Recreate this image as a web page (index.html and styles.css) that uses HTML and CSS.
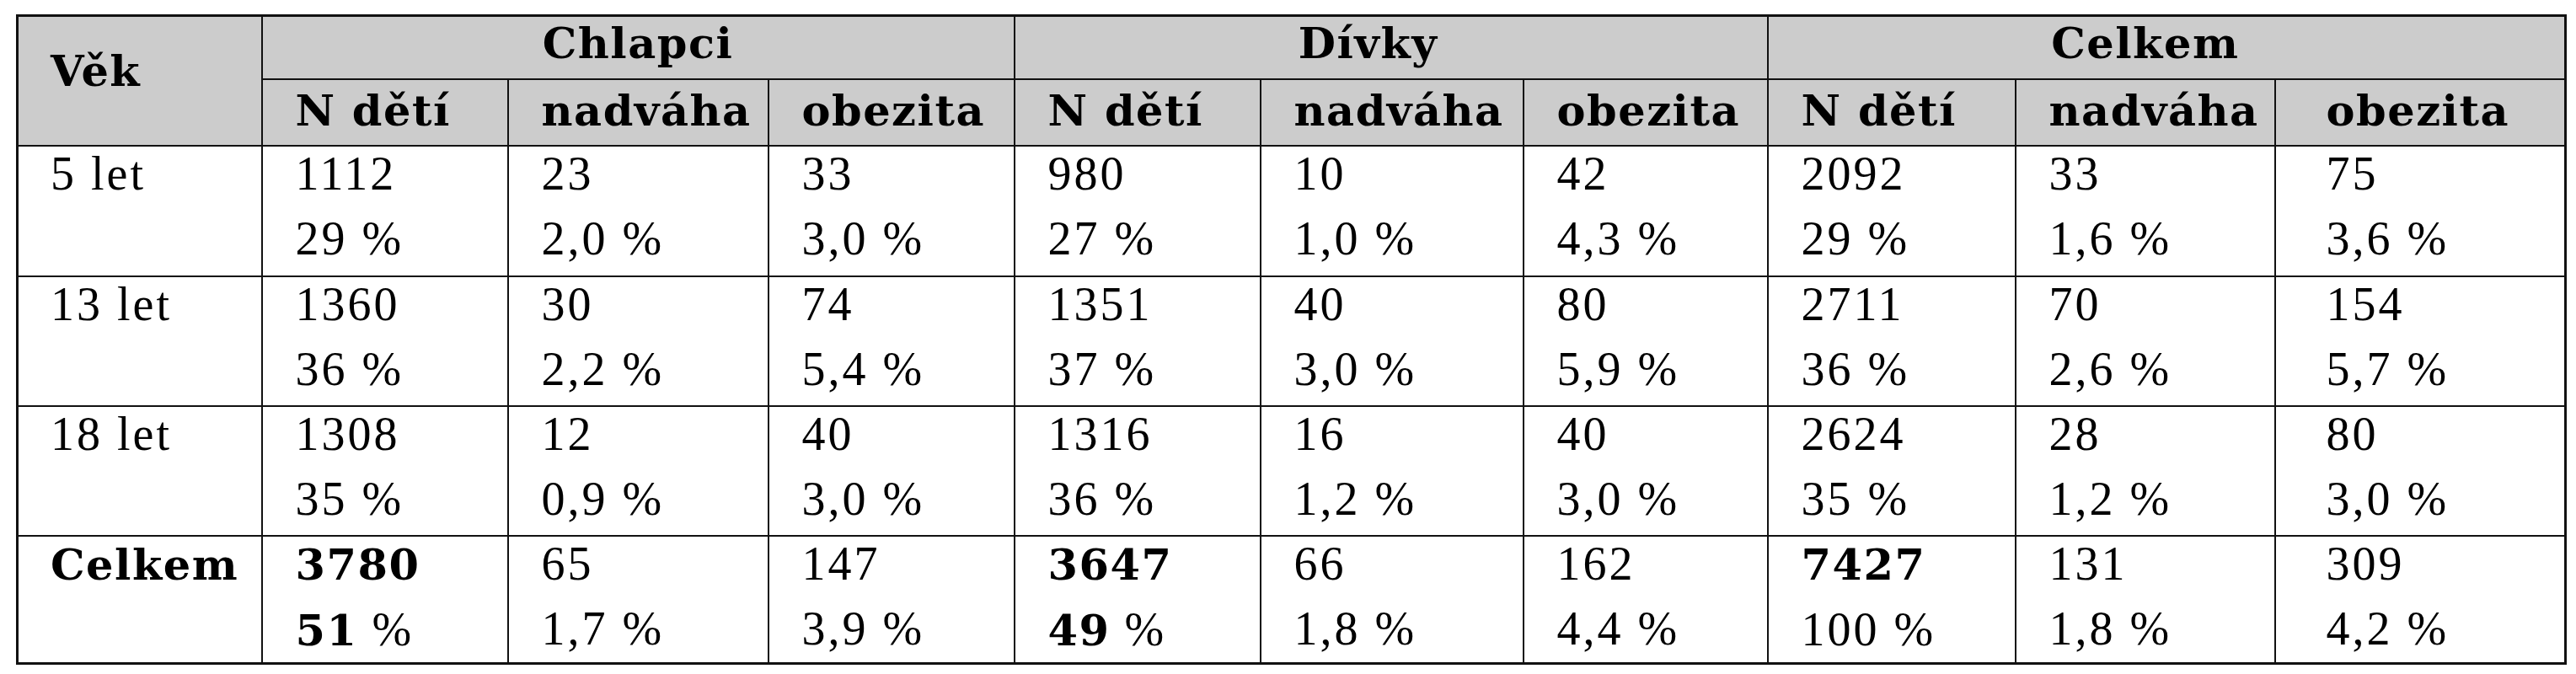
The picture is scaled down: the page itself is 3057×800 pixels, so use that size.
FILE: index.html
```html
<!DOCTYPE html>
<html lang="cs">
<head>
<meta charset="utf-8">
<title>Nadváha a obezita dětí</title>
<link rel="stylesheet" href="styles.css">
</head>
<body>
<table class="t">
  <colgroup>
    <col class="w-age">
    <col class="w-n1"><col class="w-o1"><col class="w-b1">
    <col class="w-n2"><col class="w-o2"><col class="w-b2">
    <col class="w-n3"><col class="w-o3"><col class="w-b3">
  </colgroup>
  <thead>
    <tr class="h1">
      <th rowspan="2" class="age-h">Věk</th>
      <th colspan="3" class="grp">Chlapci</th>
      <th colspan="3" class="grp grp-shift">Dívky</th>
      <th colspan="3" class="grp grp-shift2">Celkem</th>
    </tr>
    <tr class="h2">
      <th>N dětí</th><th>nadváha</th><th>obezita</th>
      <th>N dětí</th><th>nadváha</th><th>obezita</th>
      <th>N dětí</th><th>nadváha</th><th class="last">obezita</th>
    </tr>
  </thead>
  <tbody>
    <tr class="r1">
      <td class="age"><div class="l1">5 let</div></td>
      <td><div class="l1">1112</div><div class="l2">29 %</div></td>
      <td><div class="l1">23</div><div class="l2">2,0 %</div></td>
      <td><div class="l1">33</div><div class="l2">3,0 %</div></td>
      <td><div class="l1">980</div><div class="l2">27 %</div></td>
      <td><div class="l1">10</div><div class="l2">1,0 %</div></td>
      <td><div class="l1">42</div><div class="l2">4,3 %</div></td>
      <td><div class="l1">2092</div><div class="l2">29 %</div></td>
      <td><div class="l1">33</div><div class="l2">1,6 %</div></td>
      <td class="last"><div class="l1">75</div><div class="l2">3,6 %</div></td>
    </tr>
    <tr class="r2">
      <td class="age"><div class="l1">13 let</div></td>
      <td><div class="l1">1360</div><div class="l2">36 %</div></td>
      <td><div class="l1">30</div><div class="l2">2,2 %</div></td>
      <td><div class="l1">74</div><div class="l2">5,4 %</div></td>
      <td><div class="l1">1351</div><div class="l2">37 %</div></td>
      <td><div class="l1">40</div><div class="l2">3,0 %</div></td>
      <td><div class="l1">80</div><div class="l2">5,9 %</div></td>
      <td><div class="l1">2711</div><div class="l2">36 %</div></td>
      <td><div class="l1">70</div><div class="l2">2,6 %</div></td>
      <td class="last"><div class="l1">154</div><div class="l2">5,7 %</div></td>
    </tr>
    <tr class="r3">
      <td class="age"><div class="l1">18 let</div></td>
      <td><div class="l1">1308</div><div class="l2">35 %</div></td>
      <td><div class="l1">12</div><div class="l2">0,9 %</div></td>
      <td><div class="l1">40</div><div class="l2">3,0 %</div></td>
      <td><div class="l1">1316</div><div class="l2">36 %</div></td>
      <td><div class="l1">16</div><div class="l2">1,2 %</div></td>
      <td><div class="l1">40</div><div class="l2">3,0 %</div></td>
      <td><div class="l1">2624</div><div class="l2">35 %</div></td>
      <td><div class="l1">28</div><div class="l2">1,2 %</div></td>
      <td class="last"><div class="l1">80</div><div class="l2">3,0 %</div></td>
    </tr>
    <tr class="r4">
      <td class="age"><div class="l1"><span class="b">Celkem</span></div></td>
      <td class="stub"><div class="l1"><span class="b">3780</span></div><div class="l2"><span class="b">51</span> %</div></td>
      <td class="stub"><div class="l1">65</div><div class="l2">1,7 %</div></td>
      <td class="stub"><div class="l1">147</div><div class="l2">3,9 %</div></td>
      <td class="stub"><div class="l1"><span class="b">3647</span></div><div class="l2"><span class="b">49</span> %</div></td>
      <td class="stub"><div class="l1">66</div><div class="l2">1,8 %</div></td>
      <td class="stub"><div class="l1">162</div><div class="l2">4,4 %</div></td>
      <td class="stub"><div class="l1"><span class="b">7427</span></div><div class="l2">100 %</div></td>
      <td class="stub"><div class="l1">131</div><div class="l2">1,8 %</div></td>
      <td class="stub last"><div class="l1">309</div><div class="l2">4,2 %</div></td>
    </tr>
  </tbody>
</table>
</body>
</html>
```

FILE: styles.css
```css
html, body {
  margin: 0;
  padding: 0;
  background: #ffffff;
}

.t {
  border-collapse: collapse;
  table-layout: fixed;
  width: 3027px;
  margin: 17px 0 0 19px;
  border: 3px solid #111111;
  font-family: "Liberation Serif", "Times New Roman", serif;
  font-size: 56px;
  letter-spacing: 3px;
  color: #000000;
}

.w-age { width: 290px; }
.w-n1 { width: 292px; }
.w-o1 { width: 309px; }
.w-b1 { width: 292px; }
.w-n2 { width: 292px; }
.w-o2 { width: 312px; }
.w-b2 { width: 290px; }
.w-n3 { width: 294px; }
.w-o3 { width: 308px; }
.w-b3 { width: 345px; }

.t th,
.t td {
  border: 2px solid #111111;
  padding: 0 0 0 39px;
  text-align: left;
  vertical-align: top;
  white-space: nowrap;
  overflow: visible;
}

.t thead th {
  background: #cccccc;
  font-family: "DejaVu Serif", serif;
  font-weight: bold;
  font-size: 51px;
  letter-spacing: 1.5px;
  line-height: 59px;
}

.h1 { height: 75px; }
.h2 { height: 79px; }
.r1 { height: 155px; }
.r2 { height: 154px; }
.r3 { height: 154px; }
.r4 { height: 152px; }

.h1 th { padding-top: 2px; }
.h2 th { padding-top: 7px; }

.t thead .age-h {
  padding-top: 35px;
  padding-left: 38px;
}

.t thead .grp {
  text-align: center;
  padding-left: 0;
}

.t thead .grp-shift { padding-right: 54px; }
.t thead .grp-shift2 { padding-right: 50px; }

.t .last { padding-left: 60px; }
.t .age { padding-left: 38px; }

/* small overshoot of the column rules below the bottom border */
.t .stub { position: relative; }
.t .stub::after {
  content: "";
  position: absolute;
  left: -2px;
  bottom: -6px;
  width: 2px;
  height: 5px;
  background: #111111;
}

.l1 {
  line-height: 62px;
  padding-top: 1px;
}

.l2 {
  line-height: 62px;
  margin-top: 15px;
}

.b {
  font-family: "DejaVu Serif", serif;
  font-weight: bold;
  font-size: 51px;
  letter-spacing: 1.5px;
}
```
